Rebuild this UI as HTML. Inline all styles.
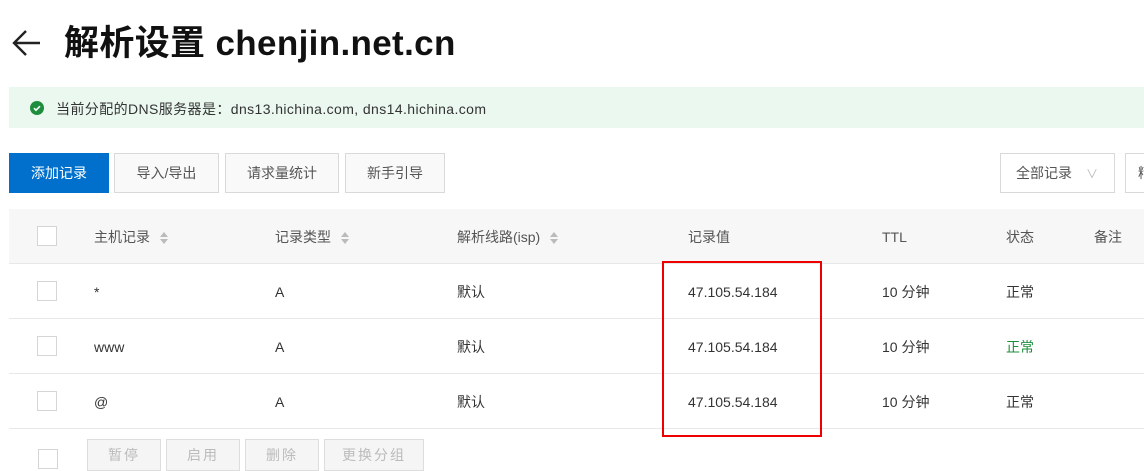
<!DOCTYPE html>
<html><head><meta charset="utf-8"><style>
*{margin:0;padding:0;box-sizing:border-box}
body{width:1144px;height:466px;overflow:hidden;background:#fff;font-family:"Liberation Sans","Noto Sans CJK SC",sans-serif;color:#333;font-size:14px;position:relative}
.a{position:absolute}
.btn{position:absolute;top:153px;height:40px;border:1px solid #d9d9d9;background:#f9f9f9;color:#555;font-size:14px;display:flex;align-items:center;justify-content:center}
.cb{position:absolute;width:20px;height:20px;border:1px solid #d5d5d5;background:#fff;left:37px}
.row{position:absolute;left:9px;width:1135px;height:55px;border-bottom:1px solid #e8e8e8}
.c{position:absolute;top:50%;transform:translateY(-50%);white-space:nowrap;margin-top:1px}
.sort{display:inline-block;margin-left:10px;vertical-align:middle;width:8px;height:12px;position:relative}
.sort:before{content:"";position:absolute;top:0;left:0;border:4px solid transparent;border-bottom:5px solid #bbb;border-top:0}
.sort:after{content:"";position:absolute;bottom:0;left:0;border:4px solid transparent;border-top:5px solid #bbb;border-bottom:0}
.bb{position:absolute;top:439px;height:32px;border:1px solid #ddd;background:#f5f5f5;color:#bbb;display:flex;align-items:center;justify-content:center;letter-spacing:2px}
</style></head><body>
<svg class="a" style="left:11px;top:28px" width="32" height="30" viewBox="0 0 32 30"><path d="M29 15H3M15 3L3 15l12 12" fill="none" stroke="#222" stroke-width="2.4"/></svg>
<div class="a" style="left:64px;top:21px;font-size:35px;font-weight:bold;color:#111;line-height:46px;letter-spacing:0.35px">解析设置 chenjin.net.cn</div>
<div class="a" style="left:9px;top:87px;width:1135px;height:41px;background:#ebf8ef"></div>
<svg class="a" style="left:30px;top:101px" width="14" height="14" viewBox="0 0 14 14"><circle cx="7" cy="7" r="7" fill="#1e8e3e"/><path d="M4 7.2l2 2 4-4" fill="none" stroke="#fff" stroke-width="1.6"/></svg>
<div class="a" style="left:56px;top:99px;font-size:14px;color:#333;letter-spacing:0.4px">当前分配的DNS服务器是：dns13.hichina.com, dns14.hichina.com</div>
<div class="btn" style="left:9px;width:100px;background:#0070cc;border-color:#0070cc;color:#fff">添加记录</div>
<div class="btn" style="left:114px;width:105px">导入/导出</div>
<div class="btn" style="left:225px;width:114px">请求量统计</div>
<div class="btn" style="left:345px;width:100px">新手引导</div>
<div class="btn" style="left:1000px;width:115px;background:#fff;color:#555;justify-content:flex-start;padding-left:15px">全部记录<span style="color:#bbb;margin-left:14px;font-size:12px">∨</span></div>
<div class="btn" style="left:1125px;width:40px;background:#fff;justify-content:flex-start;padding-left:12px">精</div>
<div class="row" style="top:209px;background:#f7f7f7">
<div class="cb" style="left:28px;top:17px"></div>
<div class="c" style="left:85px;color:#555">主机记录<span class="sort"></span></div>
<div class="c" style="left:266px;color:#555">记录类型<span class="sort"></span></div>
<div class="c" style="left:448px;color:#555">解析线路(isp)<span class="sort"></span></div>
<div class="c" style="left:679px;color:#555">记录值</div>
<div class="c" style="left:873px;color:#555">TTL</div>
<div class="c" style="left:997px;color:#555">状态</div>
<div class="c" style="left:1085px;color:#555">备注</div>
</div>
<div class="row" style="top:264px">
<div class="cb" style="left:28px;top:17px"></div>
<div class="c" style="left:85px">*</div><div class="c" style="left:266px">A</div><div class="c" style="left:448px">默认</div><div class="c" style="left:679px">47.105.54.184</div><div class="c" style="left:873px">10 分钟</div><div class="c" style="left:997px">正常</div></div>
<div class="row" style="top:319px">
<div class="cb" style="left:28px;top:17px"></div>
<div class="c" style="left:85px">www</div><div class="c" style="left:266px">A</div><div class="c" style="left:448px">默认</div><div class="c" style="left:679px">47.105.54.184</div><div class="c" style="left:873px">10 分钟</div><div class="c" style="left:997px;color:#1e8e3e">正常</div></div>
<div class="row" style="top:374px">
<div class="cb" style="left:28px;top:17px"></div>
<div class="c" style="left:85px">@</div><div class="c" style="left:266px">A</div><div class="c" style="left:448px">默认</div><div class="c" style="left:679px">47.105.54.184</div><div class="c" style="left:873px">10 分钟</div><div class="c" style="left:997px">正常</div></div>
<div class="a" style="left:662px;top:261px;width:160px;height:176px;border:2px solid #e00"></div>
<div class="cb" style="left:38px;top:449px"></div>
<div class="bb" style="left:87px;width:74px">暂停</div>
<div class="bb" style="left:166px;width:74px">启用</div>
<div class="bb" style="left:245px;width:74px">删除</div>
<div class="bb" style="left:324px;width:100px">更换分组</div>
</body></html>
